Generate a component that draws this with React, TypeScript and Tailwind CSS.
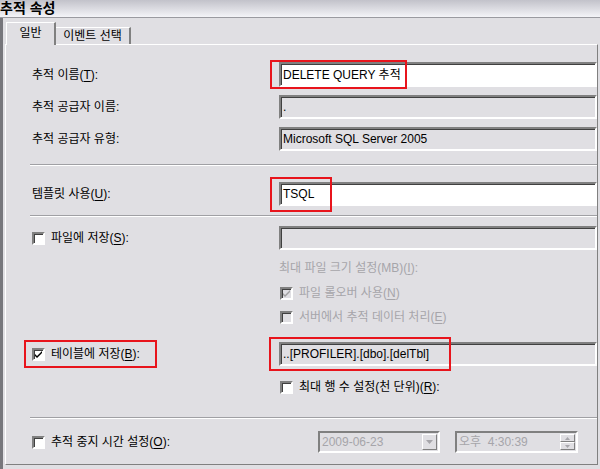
import React from "react";

const font = "font-['Liberation_Sans','Noto_Sans_CJK_KR',sans-serif]";

function U({ c }: { c: string }) {
  return <span className="underline underline-offset-2">{c}</span>;
}

function Box({
  children,
  white,
  className = "",
}: {
  children?: React.ReactNode;
  white?: boolean;
  className?: string;
}) {
  return (
    <div
      className={`flex items-center border-2 border-t-[#808080] border-l-[#808080] border-b-white border-r-white pl-[2px] shadow-[inset_1px_1px_0_#404040] text-[12px] text-black ${
        white ? "bg-white" : "bg-[#e0dfe3]"
      } ${className}`}
    >
      {children}
    </div>
  );
}

function Check({ checked, disabled }: { checked?: boolean; disabled?: boolean }) {
  return (
    <span
      className={`relative inline-block h-[13px] w-[13px] shrink-0 border-2 border-t-[#808080] border-l-[#808080] border-b-white border-r-white shadow-[inset_1px_1px_0_#404040] ${
        disabled ? "bg-[#e0dfe3]" : "bg-white"
      }`}
    >
      {checked && (
        <svg viewBox="0 0 9 9" className="absolute left-0 top-0 h-[9px] w-[9px]">
          <path
            d="M1 4 L3 6 L8 1 L8 3 L3 8 L1 6 Z"
            fill={disabled ? "#a0a0a0" : "#000"}
          />
        </svg>
      )}
    </span>
  );
}

function Sep() {
  return <div className="ml-[24px] h-[2px] border-t border-t-[#a0a0a4] border-b border-b-white" />;
}

function Redbox({ x, y, w, h }: { x: number; y: number; w: number; h: number }) {
  return (
    <div
      className="pointer-events-none absolute border-2 border-[#e8141c]"
      style={{ left: x, top: y, width: w, height: h }}
    />
  );
}

export default function App() {
  const label = "pl-[26px] w-[273px] text-[12px] text-black";
  const dim = "text-[12px] text-[#a6a5aa]";

  return (
    <div className={`relative h-[469px] w-[600px] overflow-hidden bg-[#e0dfe3] ${font}`}>
      <div className="flex h-full flex-col border-l-[3px] border-l-[#77777c]">
        {/* header */}
        <div className="h-[18px] border-b border-b-[#9a9aa0] bg-gradient-to-b from-[#c2c2ca] to-[#f4f4f8] pl-0 text-[14px] font-bold leading-[16px] text-black -ml-[3px]">
          추적 속성
        </div>

        {/* tabs */}
        <div className="flex h-[26px] items-end pl-[3px]">
          <div className="relative z-10 -mb-px flex h-[23px] w-[50px] items-center justify-center border-l border-t border-white border-r-2 border-r-[#808080] bg-[#e0dfe3] pb-[2px] text-[12px]">
            일반
          </div>
          <div className="flex h-[17px] w-[75px] items-center justify-center border-t border-white border-r-2 border-r-[#808080] text-[12px]">
            이벤트 선택
          </div>
        </div>

        {/* panel */}
        <div className="ml-[2px] mr-[2px] mb-[4px] flex flex-1 flex-col border-l border-t border-white border-r border-r-[#808080] border-b border-b-[#808080]">
          <div className="mt-[17px] flex h-[25px] items-center">
            <div className={label}>
              추적 이름(<U c="T" />):
            </div>
            <Box white className="h-[25px] flex-1">DELETE QUERY 추적</Box>
          </div>

          <div className="mt-[8px] flex h-[24px] items-center">
            <div className={label}>추적 공급자 이름:</div>
            <Box className="h-[24px] flex-1">.</Box>
          </div>

          <div className="mt-[8px] flex h-[24px] items-center">
            <div className={label}>추적 공급자 유형:</div>
            <Box className="h-[24px] flex-1">Microsoft SQL Server 2005</Box>
          </div>

          <div className="mt-[13px]">
            <Sep />
          </div>

          <div className="mt-[16px] flex h-[24px] items-center">
            <div className={label}>
              템플릿 사용(<U c="U" />):
            </div>
            <Box white className="h-[24px] flex-1">TSQL</Box>
          </div>

          <div className="mt-[9px]">
            <Sep />
          </div>

          <div className="mt-[9px] flex h-[24px] items-center">
            <div className={`${label} flex items-center gap-[6px]`}>
              <Check />
              <span>
                파일에 저장(<U c="S" />):
              </span>
            </div>
            <Box className="h-[24px] flex-1" />
          </div>

          <div className={`mt-[10px] flex h-[16px] items-center pl-[273px] ${dim}`}>
            최대 파일 크기 설정(MB)(<U c="I" />):
          </div>

          <div className={`mt-[9px] flex h-[16px] items-center gap-[6px] pl-[274px] ${dim}`}>
            <Check checked disabled />
            <span>
              파일 롤오버 사용(<U c="N" />)
            </span>
          </div>

          <div className={`mt-[8px] flex h-[16px] items-center gap-[6px] pl-[274px] ${dim}`}>
            <Check disabled />
            <span>
              서버에서 추적 데이터 처리(<U c="E" />)
            </span>
          </div>

          <div className="mt-[17px] flex h-[24px] items-center">
            <div className={`${label} flex items-center gap-[6px]`}>
              <Check checked />
              <span>
                테이블에 저장(<U c="B" />):
              </span>
            </div>
            <Box className="h-[24px] flex-1">..[PROFILER].[dbo].[delTbl]</Box>
          </div>

          <div className="mt-[13px] flex h-[16px] items-center gap-[6px] pl-[274px] text-[12px]">
            <Check />
            <span>
              최대 행 수 설정(천 단위)(<U c="R" />):
            </span>
          </div>

          <div className="mt-[22px]">
            <Sep />
          </div>

          <div className="mt-[12px] flex h-[22px] items-center">
            <div className={`${label} flex items-center gap-[6px]`}>
              <Check />
              <span>
                추적 중지 시간 설정(<U c="O" />):
              </span>
            </div>
            <div className="ml-[39px] flex h-[22px] w-[122px] items-center border-2 border-t-[#808080] border-l-[#808080] border-b-white border-r-white bg-[#e0dfe3] pl-[2px] text-[12px] text-[#a6a5aa]">
              <span className="flex-1">2009-06-23</span>
              <span className="mr-px flex h-[16px] w-[15px] items-center justify-center border border-t-white border-l-white border-b-[#808080] border-r-[#808080]">
                <svg viewBox="0 0 7 4" className="h-[4px] w-[7px]">
                  <path d="M0 0 L7 0 L3.5 4 Z" fill="#a6a5aa" />
                </svg>
              </span>
            </div>
            <div className="ml-[15px] flex h-[22px] w-[123px] items-center border-2 border-t-[#808080] border-l-[#808080] border-b-white border-r-white bg-[#e0dfe3] pl-[2px] text-[12px] text-[#a6a5aa]">
              <span className="flex-1 whitespace-pre">오후  4:30:39</span>
              <span className="mr-px flex w-[15px] flex-col">
                <span className="flex h-[8px] items-center justify-center border border-t-white border-l-white border-b-[#808080] border-r-[#808080]">
                  <svg viewBox="0 0 5 3" className="h-[3px] w-[5px]">
                    <path d="M0 3 L5 3 L2.5 0 Z" fill="#a6a5aa" />
                  </svg>
                </span>
                <span className="flex h-[8px] items-center justify-center border border-t-white border-l-white border-b-[#808080] border-r-[#808080]">
                  <svg viewBox="0 0 5 3" className="h-[3px] w-[5px]">
                    <path d="M0 0 L5 0 L2.5 3 Z" fill="#a6a5aa" />
                  </svg>
                </span>
              </span>
            </div>
          </div>
        </div>
      </div>

      <Redbox x={270} y={60} w={137} h={29} />
      <Redbox x={270} y={177} w={62} h={35} />
      <Redbox x={24} y={340} w={133} h={28} />
      <Redbox x={269} y={337} w={182} h={34} />
    </div>
  );
}
